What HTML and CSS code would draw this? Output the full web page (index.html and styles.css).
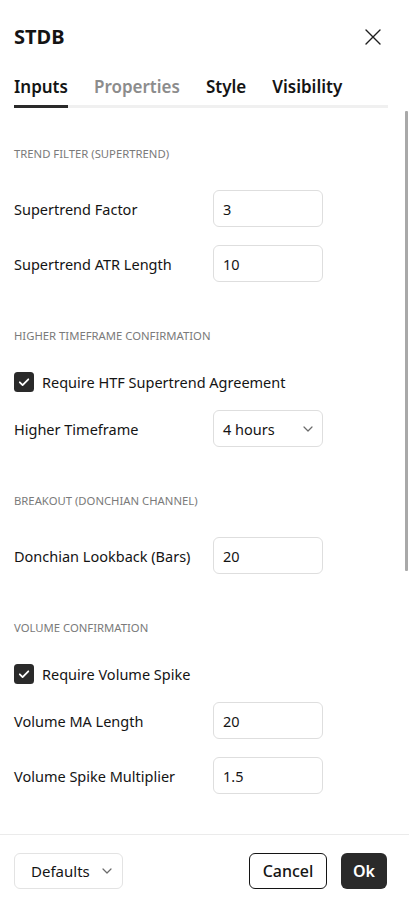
FILE: index.html
```html
<!DOCTYPE html>
<html lang="en">
<head>
<meta charset="utf-8">
<title>STDB</title>
<link rel="stylesheet" href="styles.css">
</head>
<body>
<div class="dialog">
  <header class="head">
    <h1 class="title">STDB</h1>
    <button class="close" aria-label="Close">
      <svg width="16" height="16" viewBox="0 0 16 16"><path d="M1 1L15 15M15 1L1 15" stroke="#1e1e1e" stroke-width="1.4" fill="none" stroke-linecap="round"/></svg>
    </button>
  </header>
  <nav class="tabs">
    <span class="tab active">Inputs</span>
    <span class="tab muted">Properties</span>
    <span class="tab">Style</span>
    <span class="tab">Visibility</span>
  </nav>
  <main class="body">
    <section class="section">
      <div class="section-title">Trend Filter (Supertrend)</div>
      <div class="rows">
        <div class="row"><span class="label">Supertrend Factor</span><span class="field">3</span></div>
        <div class="row"><span class="label">Supertrend ATR Length</span><span class="field">10</span></div>
      </div>
    </section>
    <section class="section">
      <div class="section-title">Higher Timeframe Confirmation</div>
      <div class="rows">
        <div class="check-row">
          <svg class="check" width="20" height="20" viewBox="0 0 20 20"><rect width="20" height="20" rx="3.5" fill="#2a2a2a"/><path d="M5.8 10.3L8.6 13.1L14.3 7.3" stroke="#fff" stroke-width="1.8" fill="none" stroke-linecap="round" stroke-linejoin="round"/></svg>
          <span class="check-label">Require HTF Supertrend Agreement</span>
        </div>
        <div class="row"><span class="label">Higher Timeframe</span><span class="field select">4 hours<svg class="chev" width="10" height="6" viewBox="0 0 10 6"><path d="M1 1L5 5L9 1" stroke="#6a6a6a" stroke-width="1.2" fill="none" stroke-linecap="round" stroke-linejoin="round"/></svg></span></div>
      </div>
    </section>
    <section class="section">
      <div class="section-title">Breakout (Donchian Channel)</div>
      <div class="rows">
        <div class="row"><span class="label">Donchian Lookback (Bars)</span><span class="field">20</span></div>
      </div>
    </section>
    <section class="section">
      <div class="section-title">Volume Confirmation</div>
      <div class="rows">
        <div class="check-row">
          <svg class="check" width="20" height="20" viewBox="0 0 20 20"><rect width="20" height="20" rx="3.5" fill="#2a2a2a"/><path d="M5.8 10.3L8.6 13.1L14.3 7.3" stroke="#fff" stroke-width="1.8" fill="none" stroke-linecap="round" stroke-linejoin="round"/></svg>
          <span class="check-label">Require Volume Spike</span>
        </div>
        <div class="row"><span class="label">Volume MA Length</span><span class="field">20</span></div>
        <div class="row"><span class="label">Volume Spike Multiplier</span><span class="field">1.5</span></div>
      </div>
    </section>
    <div class="thumb"></div>
  </main>
  <footer class="foot">
    <button class="btn defaults">Defaults<svg class="chev" width="10" height="6" viewBox="0 0 10 6"><path d="M1 1L5 5L9 1" stroke="#6a6a6a" stroke-width="1.2" fill="none" stroke-linecap="round" stroke-linejoin="round"/></svg></button>
    <div class="actions">
      <button class="btn cancel">Cancel</button>
      <button class="btn ok">Ok</button>
    </div>
  </footer>
</div>
</body>
</html>
```

FILE: styles.css
```css
html, body {
  margin: 0;
  padding: 0;
  background: #fff;
}
body {
  font-family: "Noto Sans", "Open Sans", sans-serif;
  color: #141414;
}
.dialog {
  width: 409px;
  height: 100vh;
  display: flex;
  flex-direction: column;
  overflow: hidden;
}
.head {
  display: flex;
  align-items: center;
  justify-content: space-between;
  padding: 24px 28px 0 14px;
}
.title {
  margin: 0;
  font-size: 20px;
  line-height: 26px;
  font-weight: 700;
}
.close {
  border: 0;
  background: none;
  padding: 0;
  width: 16px;
  height: 16px;
  display: flex;
}
.tabs {
  display: flex;
  gap: 26px;
  margin: 25px 21px 0 14px;
  box-shadow: inset 0 -3px 0 #f0f0f0;
}
.tab {
  font-size: 17px;
  line-height: 24px;
  font-weight: 600;
  padding-bottom: 6px;
  border-bottom: 3px solid transparent;
  color: #141414;
}
.tab.active {
  border-bottom-color: #2a2a2a;
}
.tab.muted {
  color: #8c8c8c;
}
.body {
  flex: 1;
  position: relative;
  padding: 38px 0 0 14px;
  overflow: hidden;
}
.section + .section {
  margin-top: 46px;
}
.section-title {
  font-size: 11.3px;
  line-height: 16px;
  color: #7a7a7a;
  text-transform: uppercase;
  margin-bottom: 28px;
}
.rows {
  display: flex;
  flex-direction: column;
  gap: 18px;
}
.row {
  display: flex;
  align-items: center;
}
.label {
  width: 199px;
  font-size: 14.5px;
}
.field {
  box-sizing: border-box;
  width: 110px;
  height: 37px;
  border: 1px solid #dedede;
  border-radius: 6px;
  padding: 0 9px;
  display: flex;
  align-items: center;
  justify-content: space-between;
  font-size: 14.5px;
}
.chev {
  display: block;
}
.check-row {
  display: flex;
  align-items: center;
  gap: 8px;
  height: 20px;
}
.check {
  display: block;
  flex: none;
}
.check-label {
  font-size: 14.5px;
}
.thumb {
  position: absolute;
  top: 3px;
  right: 1px;
  width: 3px;
  height: 460px;
  background: #a9a9a9;
  border-radius: 1px;
}
.foot {
  border-top: 1px solid #ebebeb;
  padding: 18px 22px 19px 14px;
  display: flex;
  justify-content: space-between;
  align-items: center;
}
.actions {
  display: flex;
  gap: 14px;
}
.btn {
  box-sizing: border-box;
  height: 36px;
  border-radius: 6px;
  font-family: inherit;
  font-size: 16px;
  font-weight: 500;
  color: #141414;
  background: #fff;
  display: flex;
  align-items: center;
  justify-content: center;
  padding: 0;
}
.defaults {
  width: 109px;
  border: 1px solid #e3e3e3;
  justify-content: space-between;
  padding: 0 10px 0 16px;
  font-weight: 400;
  font-size: 15px;
}
.cancel {
  width: 78px;
  border: 1px solid #141414;
}
.ok {
  width: 46px;
  border: 0;
  background: #2a2a2a;
  color: #fff;
  font-weight: 600;
}
```
